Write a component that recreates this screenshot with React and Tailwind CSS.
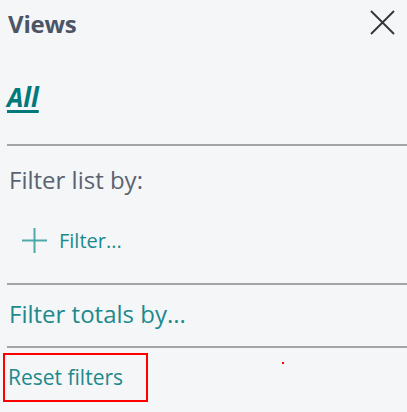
export default function App() {
  return (
    <div className="w-[407px] h-[412px] bg-[#f5f6f8] overflow-hidden relative" style={{ fontFamily: '"Segoe UI", "Open Sans", sans-serif' }}>
      <div className="h-[84px] flex items-start justify-between pl-[8px] pr-[12px] pt-[10px]">
        <span className="text-[24px] font-bold text-[#4b5565] leading-none tracking-[-0.2px] mt-[2px]">Views</span>
        <svg width="25" height="25" viewBox="0 0 25 25" className="text-[#333]">
          <path d="M1 1 L24 24 M24 1 L1 24" stroke="currentColor" strokeWidth="1.8" fill="none" />
        </svg>
      </div>

      <div className="h-[60px] pl-[7px]">
        <a className="text-[26px] font-bold italic underline decoration-[3px] underline-offset-[3px] text-[#00797c] leading-none">All</a>
      </div>

      <div className="ml-[7px] h-[2px] bg-[#a4a4a4]" />

      <div className="pl-[9px] pt-[22px] text-[24px] text-[#5b6370] leading-none">Filter list by:</div>

      <div className="flex items-center pl-[22px] mt-[36px] gap-[12px] h-[25px]">
        <svg width="25" height="25" viewBox="0 0 25 25" className="text-[#4fa9a9]">
          <path d="M12.5 0 V25 M0 12.5 H25" stroke="currentColor" strokeWidth="2" fill="none" />
        </svg>
        <span className="text-[20px] text-[#1b8a8c] leading-none">Filter...</span>
      </div>

      <div className="ml-[7px] mt-[30px] h-[2px] bg-[#a4a4a4]" />

      <div className="pl-[9px] pt-[17px] text-[24px] text-[#21898c] leading-none">Filter totals by...</div>

      <div className="ml-[7px] mt-[20px] h-[2px] bg-[#a4a4a4]" />

      <div className="ml-[3px] mt-[5px] w-[145px] h-[49px] border-2 border-[#ff0000] pl-[3px] pt-[12px]">
        <span className="text-[21px] text-[#1b8a8c] leading-none block">Reset filters</span>
      </div>

      <div className="absolute left-[282px] top-[362px] w-[2px] h-[2px] bg-[#ff0000]" />
    </div>
  );
}
